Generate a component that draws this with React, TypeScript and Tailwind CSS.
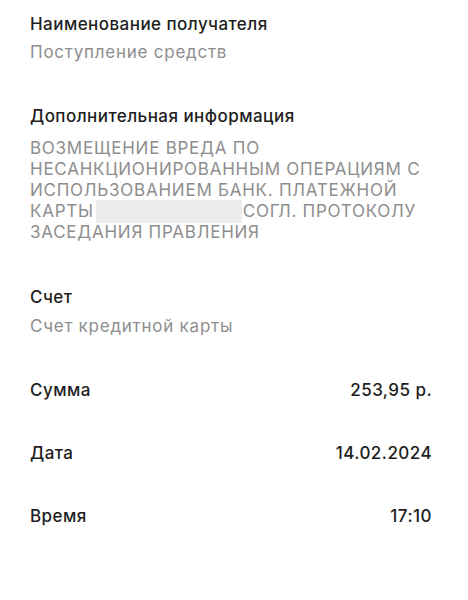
import React from "react";

const font = { fontFamily: "Inter, 'Noto Sans', sans-serif" };

export default function App() {
  return (
    <div className="w-[468px] h-[600px] bg-white text-[17px] leading-[21px] tracking-[0.75px]" style={font}>
      <div className="flex flex-col pl-[30px] pr-[36px] pt-[14px]">
        <div className="text-[#1e1e1e] font-medium tracking-[0.45px]">Наименование получателя</div>
        <div className="mt-[7px] text-[#8e8e8e]">Поступление средств</div>

        <div className="mt-[43px] text-[#1e1e1e] font-medium tracking-[0.45px]">Дополнительная информация</div>
        <div className="mt-[11px] text-[#8e8e8e]">
          <div>ВОЗМЕЩЕНИЕ ВРЕДА ПО</div>
          <div>НЕСАНКЦИОНИРОВАННЫМ ОПЕРАЦИЯМ С</div>
          <div>ИСПОЛЬЗОВАНИЕМ БАНК. ПЛАТЕЖНОЙ</div>
          <div className="flex items-center">
            <span>КАРТЫ</span>
            <span className="ml-[2px] mr-[1px] -my-[1px] inline-block w-[146px] h-[23px] bg-[#ececec]" />
            <span>СОГЛ. ПРОТОКОЛУ</span>
          </div>
          <div>ЗАСЕДАНИЯ ПРАВЛЕНИЯ</div>
        </div>

        <div className="mt-[44px] text-[#1e1e1e] font-medium tracking-[0.45px]">Счет</div>
        <div className="mt-[8px] text-[#8e8e8e]">Счет кредитной карты</div>

        <div className="mt-[43px] flex justify-between text-[#1e1e1e] font-medium tracking-[0.45px]">
          <span>Сумма</span>
          <span>253,95 р.</span>
        </div>
        <div className="mt-[42px] flex justify-between text-[#1e1e1e] font-medium tracking-[0.45px]">
          <span>Дата</span>
          <span>14.02.2024</span>
        </div>
        <div className="mt-[42px] flex justify-between text-[#1e1e1e] font-medium tracking-[0.45px]">
          <span>Время</span>
          <span>17:10</span>
        </div>
      </div>
    </div>
  );
}
